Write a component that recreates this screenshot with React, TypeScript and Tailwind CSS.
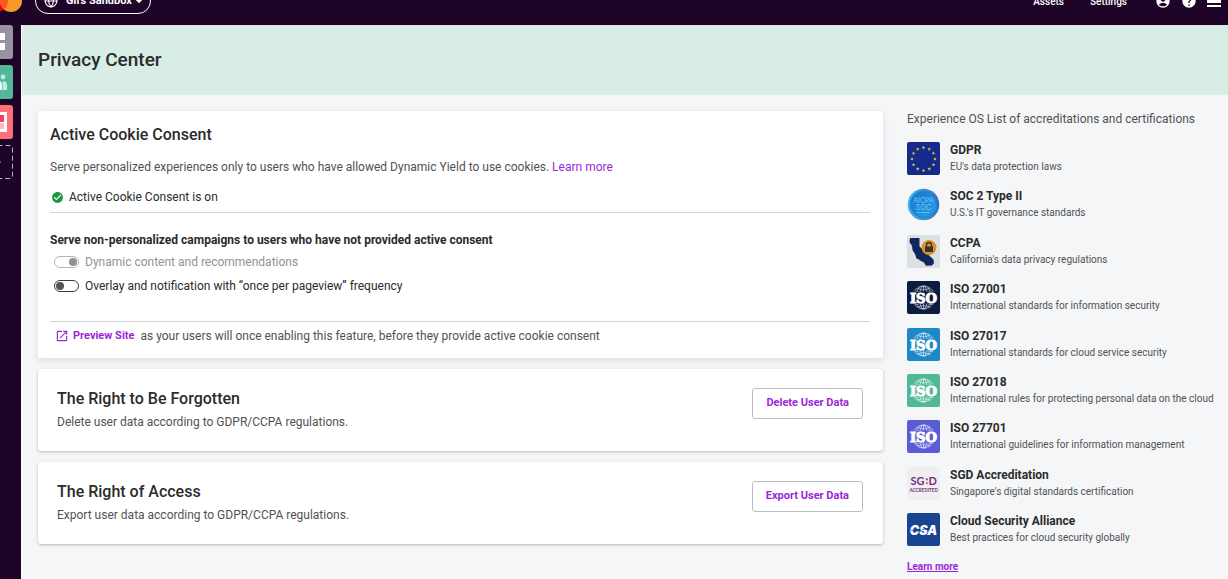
import { useState } from "react";
import type { ReactNode } from "react";
import { LuGlobe } from "react-icons/lu";
import {
	MdAccountCircle,
	MdArrowDropDown,
	MdCheckCircle,
	MdHelp,
	MdOpenInNew,
} from "react-icons/md";

interface Accreditation {
	name: string;
	description: string;
	badge: ReactNode;
}

// Small star field of the EU flag, twelve points on a circle
const EU_STARS = Array.from({ length: 12 }, (_, i) => {
	const angle = (i * Math.PI) / 6;
	return { x: 16.5 + 11.5 * Math.sin(angle), y: 17 - 11.5 * Math.cos(angle) };
});

function GdprBadge() {
	return (
		<svg viewBox="0 0 33 33" className="size-[33px] shrink-0" aria-hidden="true">
			<rect width="33" height="33" rx="2" fill="#152a8c" />
			{EU_STARS.map((star, i) => (
				<path
					key={i}
					transform={`translate(${star.x} ${star.y})`}
					d="M0-1.9.5-.6 1.8-.6.8.3 1.2 1.6 0 .8-1.2 1.6-.8.3-1.8-.6-.5-.6Z"
					fill="#e8cf2e"
				/>
			))}
		</svg>
	);
}

function SocBadge() {
	return (
		<svg viewBox="0 0 33 33" className="size-[33px] shrink-0" aria-hidden="true">
			<defs>
				<linearGradient id="soc-ring" x1="0" y1="0" x2="1" y2="0">
					<stop offset="0" stopColor="#45b4ea" />
					<stop offset="1" stopColor="#3a6fc0" />
				</linearGradient>
				<linearGradient id="soc-face" x1="0" y1="0" x2="1" y2="1">
					<stop offset="0" stopColor="#1674c8" />
					<stop offset="1" stopColor="#27a3ea" />
				</linearGradient>
			</defs>
			<circle cx="16.5" cy="16.5" r="15.8" fill="url(#soc-ring)" />
			<circle cx="16.5" cy="16.5" r="13.2" fill="url(#soc-face)" stroke="#1f7fd0" />
			<g fill="#7cc4f2" fontFamily="Inter, sans-serif" textAnchor="middle">
				<text x="16.5" y="14.5" fontSize="7">AICPA</text>
				<text x="16.5" y="22" fontSize="7.5">SOC</text>
			</g>
			<path d="M10 24.500h13" stroke="#7cc4f2" strokeDasharray="2 .6" />
		</svg>
	);
}

function CcpaBadge() {
	return (
		<svg viewBox="0 0 33 33" className="size-[33px] shrink-0" aria-hidden="true">
			<rect width="33" height="33" rx="2" fill="#dde0e3" />
			<path
				d="M3 3h9.500v8.500L26.500 24.500 27 28l-2 2.500-6 .200-2-3.200-4-2-1-1-2.500-1L8 19l-2.500-4L5 11 2.500 7Z"
				fill="#10265c"
			/>
			<circle cx="22" cy="12.500" r="7.500" fill="#d8942a" />
			<path d="M19.500 12v-2a2.500 2.500 0 0 1 5 0v2" fill="none" stroke="#3b3328" strokeWidth="1.400" />
			<rect x="18" y="11.500" width="8" height="5.500" rx=".5" fill="#3b3328" />
		</svg>
	);
}

function IsoBadge({ color }: { color: string }) {
	return (
		<svg viewBox="0 0 33 33" className="size-[33px] shrink-0" aria-hidden="true">
			<rect width="33" height="33" rx="2" fill={color} />
			<g fill="none" stroke="#fff" strokeWidth=".7" opacity=".8">
				<circle cx="16.500" cy="16.500" r="11.500" strokeDasharray="4 .8" />
				<ellipse cx="16.500" cy="16.500" rx="4" ry="11.500" />
				<ellipse cx="16.500" cy="16.500" rx="8" ry="11.500" />
				<path d="M16.500 5v23M10 7.500q6.500 3 13 0M8 10q8.500 3 17 0M8 23.500q8.500-3 17 0M10 26q6.500-3 13 0" />
			</g>
			<rect x="2.500" y="10.500" width="28" height="12.200" fill={color} />
			<text
				x="16.500"
				y="21.500"
				fontFamily="DejaVu Serif, serif"
				fontWeight="700"
				fontSize="13.200"
				textAnchor="middle"
				fill="#fff"
				stroke="#fff"
				strokeWidth="1"
			>
				ISO
			</text>
		</svg>
	);
}

function SgdBadge() {
	return (
		<svg viewBox="0 0 33 33" className="size-[33px] shrink-0" aria-hidden="true">
			<rect width="33" height="33" rx="2" fill="#efeff1" />
			<g fontFamily="Lato, sans-serif" fontWeight="700" fill="#74307e">
				<text x="3.500" y="17.500" fontSize="11">SG</text>
				<text x="21.500" y="17.500" fontSize="11">D</text>
				<text x="16.700" y="24.500" fontSize="4.600" textAnchor="middle">ACCREDITED</text>
			</g>
			<rect x="19" y="11.500" width="1.800" height="1.800" fill="#74307e" />
			<rect x="19" y="15.300" width="1.800" height="1.800" fill="#e0503f" />
		</svg>
	);
}

function CsaBadge() {
	return (
		<svg viewBox="0 0 33 33" className="size-[33px] shrink-0" aria-hidden="true">
			<rect width="33" height="33" rx="2" fill="#174591" />
			<text
				x="16.500"
				y="21.500"
				fontFamily="Inter, sans-serif"
				fontWeight="900"
				fontStyle="italic"
				fontSize="12.500"
				textAnchor="middle"
				fill="#fff"
			>
				CSA
			</text>
			<path d="M4 17.300h9M15 16.300h8" stroke="#174591" strokeWidth=".7" />
		</svg>
	);
}

const ACCREDITATIONS: Accreditation[] = [
	{ name: "GDPR", description: "EU's data protection laws", badge: <GdprBadge /> },
	{ name: "SOC 2 Type II", description: "U.S.'s IT governance standards", badge: <SocBadge /> },
	{ name: "CCPA", description: "California's data privacy regulations", badge: <CcpaBadge /> },
	{
		name: "ISO 27001",
		description: "International standards for information security",
		badge: <IsoBadge color="#0c1b40" />,
	},
	{
		name: "ISO 27017",
		description: "International standards for cloud service security",
		badge: <IsoBadge color="#1e88c7" />,
	},
	{
		name: "ISO 27018",
		description: "International rules for protecting personal data on the cloud",
		badge: <IsoBadge color="#52b898" />,
	},
	{
		name: "ISO 27701",
		description: "International guidelines for information management",
		badge: <IsoBadge color="#5b5bd6" />,
	},
	{
		name: "SGD Accreditation",
		description: "Singapore's digital standards certification",
		badge: <SgdBadge />,
	},
	{
		name: "Cloud Security Alliance",
		description: "Best practices for cloud security globally",
		badge: <CsaBadge />,
	},
];

function TopBar() {
	return (
		<header className="h-[25px] overflow-hidden text-white">
			{/* The bar is scrolled halfway out of view */}
			<div className="-mt-[23px] flex h-12 items-center">
				<svg viewBox="0 0 22 22" className="h-[22px] w-[22px] shrink-0" aria-hidden="true">
					<circle cx="-3" cy="11" r="11" fill="#eb001b" />
					<circle cx="11" cy="11" r="11" fill="#f79a2b" />
					<path d="M4 2.500a11 11 0 0 1 0 17 11 11 0 0 1 0-17Z" fill="#ff5520" />
				</svg>
				<button
					type="button"
					className="ml-[13px] flex h-[26px] items-center rounded-full border border-white pr-1 pl-2 text-[11px] font-bold"
				>
					<LuGlobe className="mr-2 size-[14px]" />
					Gil's Sandbox
					<MdArrowDropDown className="-mx-[2px] size-[18px]" />
				</button>
				<nav className="ml-auto flex items-center gap-[26px] text-[10px] font-medium">
					<a href="#assets">Assets</a>
					<a href="#settings">Settings</a>
				</nav>
				<div className="mr-[7px] ml-7 flex items-center gap-[10px]">
					<button type="button" aria-label="Account">
						<MdAccountCircle className="size-4" />
					</button>
					<button type="button" aria-label="Help">
						<MdHelp className="size-4" />
					</button>
					<button type="button" aria-label="Menu">
						<svg viewBox="0 0 14 14" className="size-[14px]" fill="#fff" aria-hidden="true">
							<path d="M0 0h14v9H0zM0 11h14v2H0z" />
						</svg>
					</button>
				</div>
			</div>
		</header>
	);
}

function SideRail() {
	return (
		<nav className="flex w-[21px] shrink-0 flex-col items-end gap-[6px] overflow-hidden pr-2">
			<a
				href="#dashboard"
				aria-label="Dashboard"
				className="flex size-[34px] shrink-0 items-center justify-center rounded-[3px] bg-[#9594a0]"
			>
				<svg viewBox="0 0 18 18" className="size-[18px]" fill="#fff">
					<path d="M0 0h8v7H0zM10 0h8v7h-8zM0 10h8v7H0zM10 10h8v7h-8z" />
				</svg>
			</a>
			<a
				href="#audiences"
				aria-label="Audiences"
				className="flex size-[34px] shrink-0 items-center justify-center rounded-[3px] bg-[#52b898]"
			>
				<svg viewBox="0 0 22 18" className="h-[18px] w-[22px]">
					<circle cx="18" cy="4" r="2.400" fill="#b8efe0" />
					<path d="M17.500 17V8.500q4-1 4.500 3.500v5Z" fill="#b8efe0" />
					<path d="M6 17V9q4-5 8-1.500 2.800 1 2.800 4V17Z" fill="#fff" />
				</svg>
			</a>
			<a
				href="#experiences"
				aria-label="Experiences"
				className="flex size-[34px] shrink-0 items-center justify-center rounded-[3px] bg-[#ff6f7a]"
			>
				<svg viewBox="0 0 22 20" className="h-5 w-[22px]">
					<path d="M0 0h22v20H0z" fill="#fff" />
					<path d="M2 3h17v7H2z" fill="#f04060" />
					<path d="M2 11h17v6H2z" fill="#fbb8c6" />
				</svg>
			</a>
			<button type="button" aria-label="Add" className="size-[34px] shrink-0">
				<svg viewBox="0 0 34 34" className="size-[34px]" fill="none" stroke="#b9b3be">
					<rect x=".5" y=".5" width="33" height="33" rx="2" strokeDasharray="5 3" />
					<path d="M17 12v10M12 17h10" />
				</svg>
			</button>
		</nav>
	);
}

function Switch({
	id,
	label,
	checked,
	disabled,
	onChange,
}: {
	id: string;
	label: string;
	checked: boolean;
	disabled?: boolean;
	onChange?: () => void;
}) {
	return (
		<div className="flex h-4 items-center gap-[6px] pl-1">
			<input
				id={id}
				type="checkbox"
				role="switch"
				checked={checked}
				disabled={disabled}
				onChange={onChange}
				className="flex h-3 w-[25px] appearance-none items-center rounded-full border border-[#3c3c3c] px-px before:size-2 before:rounded-full before:bg-[#555] checked:justify-end disabled:border-[#b5b5b5] disabled:before:bg-[#919191]"
			/>
			<label
				htmlFor={id}
				className={disabled ? "text-[12px] text-[#929292]" : "text-[12px] text-[#2b2b2b]"}
			>
				{label}
			</label>
		</div>
	);
}

function ConsentCard() {
	const [overlay, setOverlay] = useState(false);
	return (
		<section className="bg-white pt-3 pr-[13px] pb-[14px] pl-3 shadow-[0_2px_6px_rgba(40,50,70,0.14)]">
			<h2 className="text-[16px] leading-6 font-medium text-[#2b2b2b]">
				Active Cookie Consent
			</h2>
			<p className="mt-3 text-[12px] leading-4">
				Serve personalized experiences only to users who have allowed Dynamic Yield to use
				cookies.{" "}
				<a href="#cookies" className="text-[#9b26d9]">
					Learn more
				</a>
			</p>
			<p className="mt-[14px] flex items-center gap-[5px] border-b border-[#d3d3d6] pb-[7px] pl-px text-[12px] leading-4 text-[#2b2b2b]">
				<MdCheckCircle className="size-[13px] text-[#1e9445]" />
				Active Cookie Consent is on
			</p>
			<h3 className="mt-[19px] text-[12px] leading-4 font-bold text-[#2b2b2b]">
				Serve non-personalized campaigns to users who have not provided active consent
			</h3>
			<div className="mt-[6px] flex flex-col gap-2">
				<Switch
					id="dynamic-content"
					label="Dynamic content and recommendations"
					checked
					disabled
				/>
				<Switch
					id="overlay"
					label="Overlay and notification with “once per pageview” frequency"
					checked={overlay}
					onChange={() => setOverlay(!overlay)}
				/>
			</div>
			<p className="mt-[27px] flex items-center border-t border-[#d3d3d6] pt-[6px] pl-[5px] text-[12px] leading-4">
				<a
					href="#preview"
					className="mr-[6px] flex items-center gap-1 text-[11px] font-bold text-[#9b26d9]"
				>
					<MdOpenInNew className="size-[14px]" />
					Preview Site
				</a>
				as your users will once enabling this feature, before they provide active cookie consent
			</p>
		</section>
	);
}

function ActionCard({
	title,
	description,
	action,
}: {
	title: string;
	description: string;
	action: string;
}) {
	return (
		<section className="flex items-start justify-between rounded-[3px] bg-white pt-[18px] pr-5 pb-[21px] pl-[19px] shadow-[0_1px_3px_rgba(40,30,40,0.28)]">
			<div>
				<h2 className="text-[16px] leading-6 font-medium text-[#2b2b2b]">{title}</h2>
				<p className="mt-[3px] text-[12px] leading-4">{description}</p>
			</div>
			<button
				type="button"
				className="mt-px h-[31px] rounded-[3px] border border-[#bdbdc1] px-[13px] pb-px text-[11px] font-bold text-[#9b26d9]"
			>
				{action}
			</button>
		</section>
	);
}

export default function App() {
	return (
		<div className="flex min-h-screen flex-col bg-[#1e0427] font-[Roboto,sans-serif] text-[#525252]">
			<TopBar />
			<div className="flex grow">
				<SideRail />
				<main className="grow border-l border-white bg-[#f5f6f8]">
					<div className="flex h-[70px] items-center bg-[#d7ede6] px-4">
						<h1 className="text-[19px] leading-6 font-medium text-[#2b2b2b]">Privacy Center</h1>
					</div>
					<div className="flex gap-6 pl-4">
						<div className="flex grow flex-col gap-[11px] pt-4">
							<ConsentCard />
							<ActionCard
								title="The Right to Be Forgotten"
								description="Delete user data according to GDPR/CCPA regulations."
								action="Delete User Data"
							/>
							<ActionCard
								title="The Right of Access"
								description="Export user data according to GDPR/CCPA regulations."
								action="Export User Data"
							/>
						</div>
						<aside className="w-[321px] shrink-0 pt-4">
							<h2 className="text-[12px] leading-4">
								Experience OS List of accreditations and certifications
							</h2>
							<ul className="mt-[15px] flex h-[404px] flex-col justify-between">
								{ACCREDITATIONS.map((item) => (
									<li key={item.name} className="flex h-[33px] gap-[10px]">
										{item.badge}
										<div className="whitespace-nowrap">
											<h3 className="text-[12px] leading-4 font-bold text-[#2b2b2b]">
												{item.name}
											</h3>
											<p className="mt-px text-[10px] leading-4">{item.description}</p>
										</div>
									</li>
								))}
							</ul>
							<a
								href="#accreditations"
								className="mt-[13px] block text-[10px] leading-4 font-bold text-[#9b26d9] underline"
							>
								Learn more
							</a>
						</aside>
					</div>
				</main>
			</div>
		</div>
	);
}
